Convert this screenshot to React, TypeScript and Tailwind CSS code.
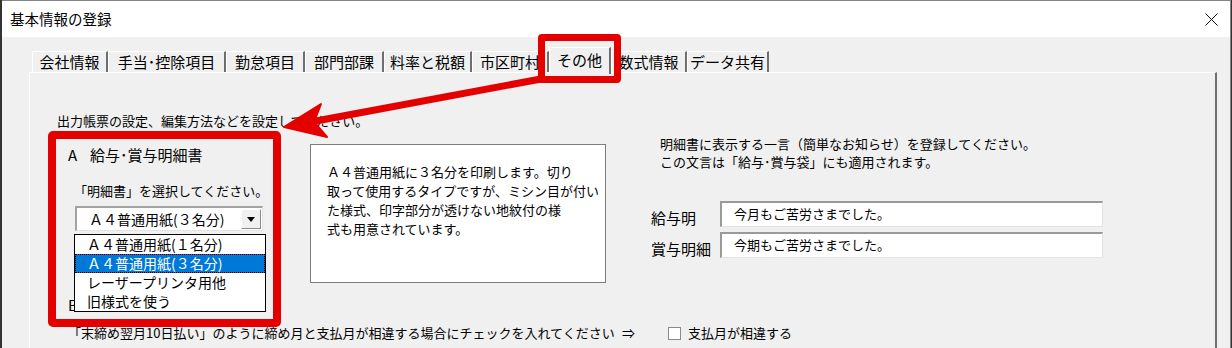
import React from "react";

const tabs = [
  { label: "会社情報", w: "w-[76px]" },
  { label: "手当･控除項目", w: "w-[118px]" },
  { label: "勤怠項目", w: "w-[79px]" },
  { label: "部門部課", w: "w-[79px]" },
  { label: "料率と税額", w: "w-[88px]" },
  { label: "市区町村", w: "w-[77px]" },
  { label: "その他", w: "w-[62px]", active: true },
  { label: "数式情報", w: "w-[76px]" },
  { label: "データ共有", w: "w-[82px]" },
];

const options = [
  "Ａ４普通用紙(１名分)",
  "Ａ４普通用紙(３名分)",
  "レーザープリンタ用他",
  "旧様式を使う",
];

export default function App() {
  return (
    <div className="relative w-[1232px] h-[348px] overflow-hidden bg-[#333333] pl-[2px] pr-[1px] flex font-['Noto_Sans_CJK_JP','Noto_Sans',sans-serif] text-black">
      <div className="flex-1 flex flex-col border-t border-r border-[#858585]">
        {/* title bar */}
        <div className="h-[36px] bg-white flex items-center justify-between pl-[8px] pr-[12px]">
          <span className="text-[14.5px] leading-[20px]">基本情報の登録</span>
          <svg width="13" height="13" viewBox="0 0 13 13">
            <path d="M0.5 0.5 L12.5 12.5 M12.5 0.5 L0.5 12.5" stroke="#111" strokeWidth="1" />
          </svg>
        </div>

        {/* body */}
        <div className="flex-1 flex flex-col bg-[#f0f0f0] pl-[27px] pr-[13px] pt-[10px]">
          {/* tab strip */}
          <div className="h-[25px] pl-[3px] flex items-end">
            {tabs.map((t) =>
              t.active ? (
                <div
                  key={t.label}
                  className={`${t.w} relative z-10 -mb-[2px] h-[27px] bg-[#f0f0f0] border-t border-l border-white border-r-2 border-r-[#6f6f6f] text-center text-[15px] leading-[24px]`}
                >
                  {t.label}
                </div>
              ) : (
                <div
                  key={t.label}
                  className={`${t.w} h-[21px] bg-[#f0f0f0] border-t border-l border-white border-r-2 border-r-[#6f6f6f] text-center text-[15px] leading-[20px] whitespace-nowrap`}
                >
                  {t.label}
                </div>
              )
            )}
          </div>

          {/* tab panel */}
          <div className="flex-1 border-t border-l border-white border-r-2 border-r-[#6f6f6f] pl-[27px] pt-[39px]">
            <p className="text-[13px] leading-[18px] whitespace-nowrap">出力帳票の設定、編集方法などを設定してください。</p>

            <div className="flex items-start">
              {/* A section */}
              <div className="ml-[11px] w-[242px] pt-[15px]">
                <div className="flex h-[20px] items-center text-[15px] leading-[20px]">
                  <span className="w-[22px]">A</span>
                  <span>給与･賞与明細書</span>
                </div>
                <p className="mt-[17px] ml-[6px] text-[13px] leading-[18px] whitespace-nowrap">「明細書」を選択してください。</p>
                <div className="relative mt-[6px] ml-[7px] w-[188px] h-[25px] bg-white border-t-2 border-l-2 border-[#a3a3a3] border-b border-r border-b-[#e3e3e3] border-r-[#e3e3e3] flex items-center">
                  <span className="pl-[12px] text-[14px] leading-[20px] flex-1 whitespace-nowrap">Ａ４普通用紙(３名分)</span>
                  <div className="mr-[1px] w-[20px] h-[20px] bg-[#f0f0f0] border-t border-l border-white border-b border-r border-b-[#8a8a8a] border-r-[#8a8a8a] flex items-center justify-center">
                    <svg width="8" height="5" viewBox="0 0 8 5">
                      <path d="M0 0 H8 L4 5 Z" fill="#000" />
                    </svg>
                  </div>
                  {/* open list */}
                  <div className="absolute left-[-3px] top-[26px] z-20 w-[192px] h-[78px] bg-white border border-black">
                    {options.map((o, i) =>
                      i === 1 ? (
                        <div key={o} className="h-[19px] bg-[#0078d7] text-white border border-dotted border-black pl-[11px] text-[14px] leading-[17px] whitespace-nowrap">
                          {o}
                        </div>
                      ) : (
                        <div key={o} className="h-[19px] pl-[12px] text-[14px] leading-[19px] whitespace-nowrap">
                          {o}
                        </div>
                      )
                    )}
                  </div>
                </div>
                <div className="mt-[64px] text-[15px] leading-[20px]">B</div>
              </div>

              {/* description box */}
              <div className="mt-[14px] w-[296px] h-[139px] bg-white border border-[#7c7c7c] pl-[16px] pt-[17px] text-[13px] leading-[19px] whitespace-nowrap">
                <p>Ａ４普通用紙に３名分を印刷します。切り</p>
                <p>取って使用するタイプですが、ミシン目が付い</p>
                <p>た様式、印字部分が透けない地紋付の様</p>
                <p>式も用意されています。</p>
              </div>

              {/* message section */}
              <div className="ml-[45px] pt-[5px]">
                <div className="pl-[9px] text-[13px] leading-[18px] whitespace-nowrap">
                  <p>明細書に表示する一言（簡単なお知らせ）を登録してください。</p>
                  <p>この文言は「給与･賞与袋」にも適用されます。</p>
                </div>
                <div className="mt-[30px] flex items-end">
                  <span className="w-[69px] text-[15px] leading-[18px]">給与明</span>
                  <div className="w-[383px] h-[26px] bg-white border-t-2 border-l-2 border-[#9a9a9a] border-b border-r border-b-[#e3e3e3] border-r-[#e3e3e3] pl-[12px] text-[13px] leading-[22px]">
                    今月もご苦労さまでした。
                  </div>
                </div>
                <div className="mt-[5px] flex items-end">
                  <span className="w-[69px] text-[15px] leading-[18px]">賞与明細</span>
                  <div className="w-[383px] h-[26px] bg-white border-t-2 border-l-2 border-[#9a9a9a] border-b border-r border-b-[#e3e3e3] border-r-[#e3e3e3] pl-[12px] text-[13px] leading-[22px]">
                    今期もご苦労さまでした。
                  </div>
                </div>
              </div>
            </div>

            {/* bottom option */}
            <div className="mt-[9px] ml-[11px] flex items-center h-[18px] text-[13px] leading-[18px] whitespace-nowrap">
              <div className="w-[600px] flex">
                <span className="w-[554px]">「末締め翌月10日払い」のように締め月と支払月が相違する場合にチェックを入れてください</span>
                <span>⇒</span>
              </div>
              <span className="w-[13px] h-[13px] bg-white border border-[#8a8a8a]" />
              <span className="ml-[7px]">支払月が相違する</span>
            </div>
          </div>
        </div>
      </div>

      {/* annotations */}
      <div className="absolute left-[538px] top-[34px] w-[83px] h-[49px] border-[7px] border-[#e50000] rounded-[4px] pointer-events-none" />
      <div className="absolute left-[48px] top-[131px] w-[233px] h-[196px] border-[8px] border-[#e50000] rounded-[5px] pointer-events-none z-30" />
      <svg className="absolute left-0 top-0 pointer-events-none z-30" width="1232" height="348" viewBox="0 0 1232 348">
        <line x1="541" y1="79" x2="316" y2="121" stroke="#e50000" strokeWidth="7" strokeLinecap="round" />
        <polygon points="284,127 321,104 314,122 327,137" fill="#e50000" stroke="#e50000" strokeWidth="2" strokeLinejoin="round" />
      </svg>
    </div>
  );
}
